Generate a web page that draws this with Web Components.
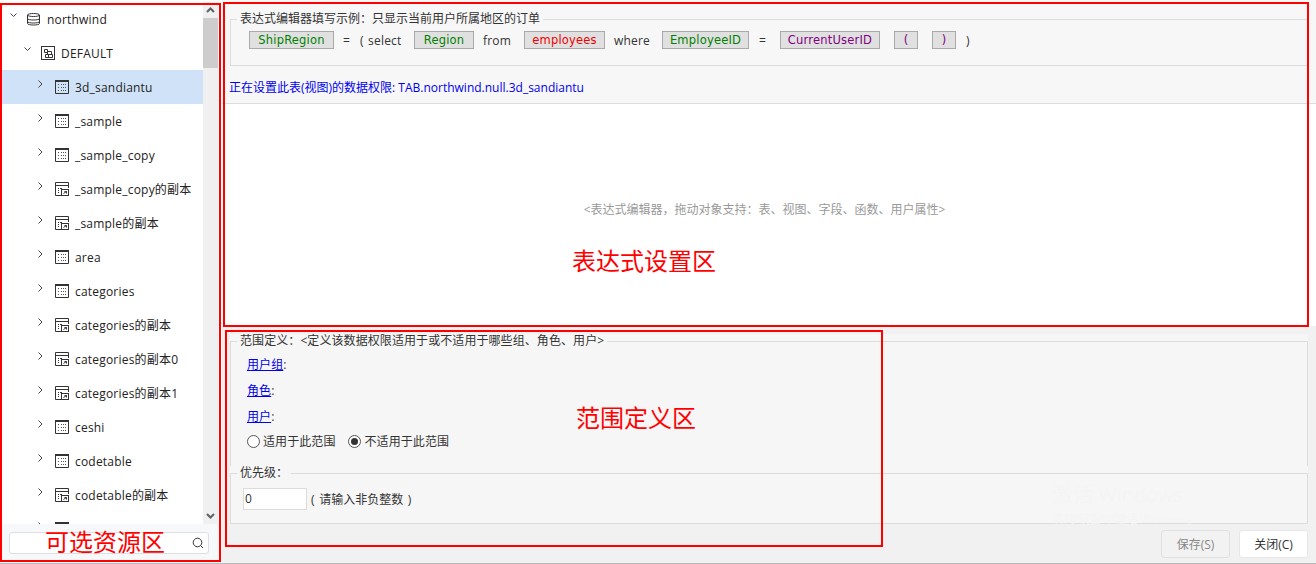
<!DOCTYPE html>
<html lang="zh-CN">
<head>
<meta charset="utf-8">
<title>数据权限</title>
<style>
  html, body { margin: 0; height: 100%; overflow: hidden; background: #f1f1f1; }
  body { font: 12px "Open Sans", "Noto Sans CJK SC", sans-serif; color: #333; }
</style>
</head>
<body>
<perm-page>
  <res-sidebar slot="side">
    <tree-row level="0" icon="db" open>northwind</tree-row>
    <tree-row level="1" icon="schema" open>DEFAULT</tree-row>
    <tree-row level="2" icon="table" selected>3d_sandiantu</tree-row>
    <tree-row level="2" icon="table">_sample</tree-row>
    <tree-row level="2" icon="table">_sample_copy</tree-row>
    <tree-row level="2" icon="copy">_sample_copy的副本</tree-row>
    <tree-row level="2" icon="copy">_sample的副本</tree-row>
    <tree-row level="2" icon="table">area</tree-row>
    <tree-row level="2" icon="table">categories</tree-row>
    <tree-row level="2" icon="copy">categories的副本</tree-row>
    <tree-row level="2" icon="copy">categories的副本0</tree-row>
    <tree-row level="2" icon="copy">categories的副本1</tree-row>
    <tree-row level="2" icon="table">ceshi</tree-row>
    <tree-row level="2" icon="table">codetable</tree-row>
    <tree-row level="2" icon="copy">codetable的副本</tree-row>
    <tree-row level="2" icon="table"></tree-row>
  </res-sidebar>

  <expr-panel slot="main"></expr-panel>
  <scope-panel slot="main"></scope-panel>

  <foot-bar slot="main">
    <action-btn disabled>保存(S)</action-btn>
    <action-btn>关闭(C)</action-btn>
  </foot-bar>
</perm-page>

<mark-box style="left:0;top:3px;width:221px;height:559px" label="可选资源区" lx="43" ly="522"></mark-box>
<mark-box style="left:223px;top:2px;width:1086px;height:325px" label="表达式设置区" lx="347" ly="242"></mark-box>
<mark-box style="left:225px;top:330px;width:658px;height:217px" label="范围定义区" lx="349" ly="71"></mark-box>
<os-watermark></os-watermark>

<script>
const ICONS = {
  db: `<svg width="13" height="14" viewBox="0 0 13 14" fill="none" stroke="#333"><path d="M.5 3C.5 1 12.5 1 12.5 3V11.500C12.500 13.500 .5 13.500 .5 11.500Z"/><path d="M.5 3C.5 5 12.500 5 12.500 3M.5 6.500C.5 8.500 12.500 8.500 12.500 6.500M.5 9.500C.5 11.500 12.500 11.500 12.500 9.500"/></svg>`,
  schema: `<svg width="14" height="14" viewBox="0 0 14 14" fill="none" stroke="#333"><rect x=".5" y=".5" width="13" height="13"/><path d="M3.500 3.500H6.500V6.500H3.500ZM6.500 5.500H10.500V8.500H6.500ZM4.500 8.500H7.500V11.500H4.500ZM7.500 8.500H11.500V11.500H7.500Z"/></svg>`,
  table: `<svg width="14" height="14" viewBox="0 0 14 14" fill="none" stroke="#333"><path d="M.5 1.500H13.500V13.500H.5Z"/><path d="M0 1H14" stroke-width="2"/><path d="M3 4.500H5M6 4.500H11M3 7.500H5M6 7.500H11M3 10.500H5M6 10.500H11" stroke="#555" stroke-dasharray="1 1"/></svg>`,
  copy: `<svg width="14" height="14" viewBox="0 0 14 14" fill="none" stroke="#333"><path d="M6 13.500H.5V.5H13.500V6"/><path d="M.5 3.500H13.500"/><path d="M3 6.500H4M5 6.500H7M3 8.500H4M3 10.500H4"/><rect x="6.500" y="7.500" width="7" height="6"/><path d="M8.500 11.500L11.500 9.500M9.500 9.500H11.500V11.500"/></svg>`
};

class PermPage extends HTMLElement {
  constructor() {
    super();
    this.attachShadow({ mode: 'open' }).innerHTML = `
      <style>
        :host { display: flex; height: 564px; box-sizing: border-box; border-bottom: 1px solid #b9b9b9; }
        .main { flex: 1; min-width: 0; display: flex; flex-direction: column; }
      </style>
      <slot name="side"></slot>
      <div class="main"><slot name="main"></slot></div>`;
  }
}

class ResSidebar extends HTMLElement {
  constructor() {
    super();
    this.attachShadow({ mode: 'open' }).innerHTML = `
      <style>
        :host { display: flex; flex: none; flex-direction: column; width: 222px; height: 563px; background: #fff; box-sizing: border-box; padding-top: 2px; }
        .top { flex: 1; min-height: 0; display: flex; }
        .list { width: 203px; overflow: hidden; }
        .bar { width: 15px; background: #f0f0f0; display: flex; flex-direction: column; align-items: center; }
        .up, .down { height: 16px; display: flex; align-items: center; justify-content: center; }
        .thumb { align-self: stretch; height: 50px; background: #cdcdcd; }
        .gap { flex: 1; }
        .find { flex: none; height: 39px; background: #f7f8fa; display: flex; padding: 8px 13px 9px 9px; box-sizing: border-box; }
        .box { flex: 1; background: #fff; border: 1px solid #dcdfe6; border-radius: 3px; display: flex; align-items: center; justify-content: flex-end; padding-right: 4px; }
      </style>
      <div class="top">
        <div class="list"><slot></slot></div>
        <div class="bar">
          <div class="up"><svg width="9" height="6" viewBox="0 0 9 6" fill="none" stroke="#606060" stroke-width="2"><path d="M1 5L4.500 1.500L8 5"/></svg></div>
          <div class="thumb"></div>
          <div class="gap"></div>
          <div class="down"><svg width="9" height="6" viewBox="0 0 9 6" fill="none" stroke="#606060" stroke-width="2"><path d="M1 1L4.500 4.500L8 1"/></svg></div>
        </div>
      </div>
      <div class="find"><div class="box"><svg width="12" height="12" viewBox="0 0 12 12" fill="none" stroke="#333"><circle cx="5.500" cy="5.500" r="4.300"/><path d="M8.500 8.500L11 11"/></svg></div></div>`;
  }
}

class TreeRow extends HTMLElement {
  connectedCallback() {
    if (this.shadowRoot) return;
    const level = Number(this.getAttribute('level') || 0);
    const open = this.hasAttribute('open');
    const chev = open
      ? '<svg width="7" height="5" viewBox="0 0 7 5" fill="none" stroke="#444"><path d="M.5 .5L3.500 3.500L6.500 .5"/></svg>'
      : '<svg width="5" height="8" viewBox="0 0 5 8" fill="none" stroke="#444"><path d="M.5 .5L4 4L.5 7.500"/></svg>';
    this.attachShadow({ mode: 'open' }).innerHTML = `
      <style>
        :host { display: flex; align-items: center; height: 34px; box-sizing: border-box; padding-left: ${10 + level * 14}px; white-space: nowrap; color: #222; letter-spacing: .2px; }
        :host([selected]) { background: #cfe2f8; }
        .chev { flex: none; width: 17px; height: 14px; display: flex; align-items: flex-start; padding-top: ${open ? 3 : 2}px; box-sizing: border-box; margin-top: -4px; }
        .icon { flex: none; width: 20px; height: 14px; display: flex; }
      </style>
      <span class="chev">${chev}</span>
      <span class="icon">${ICONS[this.getAttribute('icon')]}</span>
      <slot></slot>`;
  }
}

class GroupBox extends HTMLElement {
  constructor() {
    super();
    this.attachShadow({ mode: 'open' }).innerHTML = `
      <style>
        :host { display: block; }
        fieldset { margin: 0; padding: 0; border: 1px solid #dddcd8; min-width: 0; height: 100%; box-sizing: border-box; }
        legend { margin-left: 6px; padding: 0 3px; line-height: 14px; color: #333; white-space: nowrap; }
      </style>
      <fieldset><legend><slot name="title"></slot></legend><slot></slot></fieldset>`;
  }
}

class TokenChip extends HTMLElement {
  connectedCallback() {
    if (this.shadowRoot) return;
    this.attachShadow({ mode: 'open' }).innerHTML = `
      <style>
        :host { display: block; flex: none; box-sizing: border-box; height: 18px; line-height: 16px; text-align: center; background: #e0e0e0; border: 1px solid #aaa; font-family: "DejaVu Sans", sans-serif; font-size: 11.500px; white-space: nowrap; overflow: hidden; }
      </style>
      <slot></slot>`;
  }
}

class ExprPanel extends HTMLElement {
  constructor() {
    super();
    this.attachShadow({ mode: 'open' }).innerHTML = `
      <style>
        :host { display: flex; flex: none; flex-direction: column; height: 326px; background: #f7f7f7; box-sizing: border-box; padding-top: 12px; }
        group-box { height: 54px; margin: 0 8px 0 8px; flex: none; }
        .expr { display: flex; align-items: center; height: 18px; padding-left: 18px; margin-top: 5px; color: #333; white-space: nowrap; letter-spacing: .2px; word-spacing: 1px; }
        .expr > * { flex: none; }
        .note { flex: none; height: 37px; line-height: 43px; color: #0000ee; padding-left: 7px; border-bottom: 1px solid #dcdcdc; box-sizing: content-box; white-space: nowrap; }
        .edit { flex: 1; background: #fff; display: flex; align-items: center; justify-content: center; color: #999; font-size: 12px; padding: 0 9px 12px 0; }
        .g { color: #008000; } .r { color: #f00000; } .p { color: #800080; }
      </style>
      <group-box>
        <span slot="title">表达式编辑器填写示例：只显示当前用户所属地区的订单</span>
        <div class="expr">
          <token-chip class="g" style="width:85px">ShipRegion</token-chip>
          <span style="margin-left:9px;width:7px">=</span>
          <span style="margin-left:10px;width:41px">( select</span>
          <token-chip class="g" style="width:60px;margin-left:13px">Region</token-chip>
          <span style="margin-left:9px;width:27px">from</span>
          <token-chip class="r" style="width:81px;margin-left:14px">employees</token-chip>
          <span style="margin-left:9px;width:34px">where</span>
          <token-chip class="g" style="width:87px;margin-left:14px">EmployeeID</token-chip>
          <span style="margin-left:10px;width:7px">=</span>
          <token-chip class="p" style="width:100px;margin-left:14px">CurrentUserID</token-chip>
          <token-chip class="p" style="width:24px;margin-left:14px">(</token-chip>
          <token-chip class="p" style="width:24px;margin-left:14px">)</token-chip>
          <span style="margin-left:10px">)</span>
        </div>
      </group-box>
      <div class="note">正在设置此表(视图)的数据权限: TAB.northwind.null.3d_sandiantu</div>
      <div class="edit">&lt;表达式编辑器，拖动对象支持：表、视图、字段、函数、用户属性&gt;</div>`;
  }
}

class ScopePanel extends HTMLElement {
  constructor() {
    super();
    this.attachShadow({ mode: 'open' }).innerHTML = `
      <style>
        :host { display: flex; flex-direction: column; padding: 8px 8px 0 8px; flex: none; }
        group-box.scope { height: 133px; background: #f6f6f6; flex: none; letter-spacing: .08px; }
        group-box.prio { height: 58px; margin-top: -1px; background: #f6f6f6; flex: none; }
        .rows { padding: 8px 0 0 16px; }
        .row { height: 26px; line-height: 18px; color: #333; white-space: nowrap; }
        a { color: #0000ee; text-decoration: underline; }
        .radios { display: flex; align-items: center; height: 18px; margin-top: -2px; gap: 3px; }
        .dot { width: 13px; height: 13px; border: 1px solid #555; border-radius: 50%; background: #fff; box-sizing: border-box; display: flex; align-items: center; justify-content: center; flex: none; }
        .dot.on::after { content: ""; width: 7px; height: 7px; border-radius: 50%; background: #333; }
        .radios span + .dot { margin-left: 10px; }
        .num { display: flex; align-items: center; gap: 4px; padding: 8px 0 0 12px; color: #333; }
        .val { width: 64px; height: 22px; box-sizing: border-box; background: #fff; border: 1px solid #dcdcd8; line-height: 20px; padding-left: 1px; }
        .hint { word-spacing: 1.500px; }
      </style>
      <group-box class="scope">
        <span slot="title">范围定义：&lt;定义该数据权限适用于或不适用于哪些组、角色、用户&gt;</span>
        <div class="rows">
          <div class="row"><a>用户组</a>:</div>
          <div class="row"><a>角色</a>:</div>
          <div class="row"><a>用户</a>:</div>
          <div class="radios"><i class="dot"></i><span>适用于此范围</span><i class="dot on"></i><span>不适用于此范围</span></div>
        </div>
      </group-box>
      <group-box class="prio">
        <span slot="title">优先级：</span>
        <div class="num"><div class="val">0</div><span class="hint">( 请输入非负整数 )</span></div>
      </group-box>`;
  }
}

class FootBar extends HTMLElement {
  constructor() {
    super();
    this.attachShadow({ mode: 'open' }).innerHTML = `
      <style>
        :host { display: flex; justify-content: flex-end; gap: 9px; padding: 6px 8px 0 0; }
      </style>
      <slot></slot>`;
  }
}

class ActionBtn extends HTMLElement {
  constructor() {
    super();
    this.attachShadow({ mode: 'open' }).innerHTML = `
      <style>
        :host { display: flex; align-items: center; justify-content: center; width: 69px; height: 28px; box-sizing: border-box; background: #fff; border: 1px solid #e6e6e6; border-radius: 3px; color: #333; }
        :host([disabled]) { background: #f2f2f2; border-color: #e0e0e0; color: #888; }
      </style>
      <slot></slot>`;
  }
}

class MarkBox extends HTMLElement {
  connectedCallback() {
    if (this.shadowRoot) return;
    this.attachShadow({ mode: 'open' }).innerHTML = `
      <style>
        :host { position: absolute; box-sizing: border-box; border: 2px solid #f00; pointer-events: none; }
        span { position: absolute; left: ${this.getAttribute('lx')}px; top: ${this.getAttribute('ly')}px; color: #f00; font: 24px/28px "Noto Sans CJK SC", sans-serif; white-space: nowrap; }
      </style>
      <span>${this.getAttribute('label')}</span>`;
  }
}

// faint OS activation mark that sits over the lower right of the window
class OsWatermark extends HTMLElement {
  constructor() {
    super();
    this.attachShadow({ mode: 'open' }).innerHTML = `
      <style>
        :host { position: absolute; left: 1053px; top: 481px; color: #f4f4f4; pointer-events: none; white-space: nowrap; }
        .big { font-size: 20px; line-height: 28px; }
        .small { font-size: 11px; line-height: 16px; margin-top: 2px; }
      </style>
      <div class="big">激活 Windows</div>
      <div class="small">转到“设置”以激活 Windows。</div>`;
  }
}

customElements.define('perm-page', PermPage);
customElements.define('res-sidebar', ResSidebar);
customElements.define('tree-row', TreeRow);
customElements.define('group-box', GroupBox);
customElements.define('token-chip', TokenChip);
customElements.define('expr-panel', ExprPanel);
customElements.define('scope-panel', ScopePanel);
customElements.define('foot-bar', FootBar);
customElements.define('action-btn', ActionBtn);
customElements.define('mark-box', MarkBox);
customElements.define('os-watermark', OsWatermark);
</script>
</body>
</html>
